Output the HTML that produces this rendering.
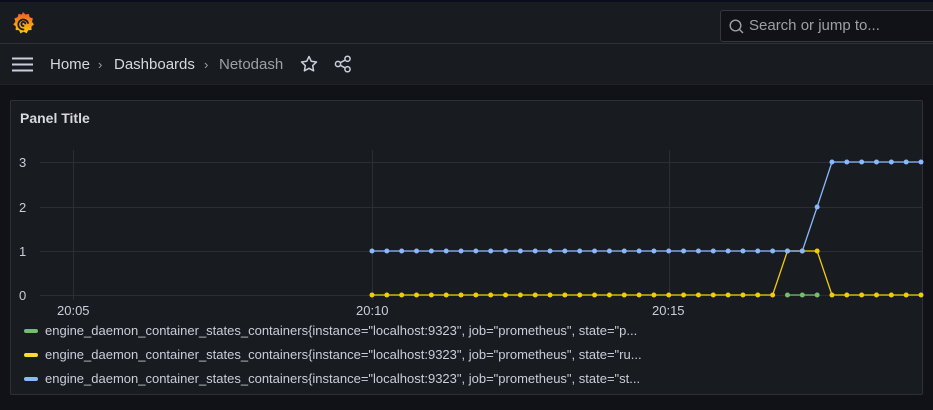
<!DOCTYPE html>
<html><head><meta charset="utf-8"><style>
*{margin:0;padding:0;box-sizing:border-box}
body{width:933px;height:410px;background:#111217;font-family:"Liberation Sans",sans-serif;position:relative;overflow:hidden;color:#ccccdc}
.top{position:absolute;left:0;top:0;width:933px;height:44px;background:#181b1f;border-top:2px solid #0b0c1e;border-bottom:1px solid #2c3039}
.search{position:absolute;left:720px;top:8px;width:230px;height:32px;border:1px solid #34373e;border-radius:3px;background:#111217;color:#9da0a8;font-size:15px;padding:6px 0 0 28px}
.nav{position:absolute;left:0;top:44px;width:933px;height:41px;background:#181b1f;border-bottom:1px solid #202226}
.bc{position:absolute;top:12px;font-size:15px;color:#d8d9dd}
.panel{position:absolute;left:10px;top:100px;width:913px;height:295px;background:#181b1f;border:1px solid #2c3039;border-radius:2px}
.title{position:absolute;left:9px;top:9px;font-size:14px;font-weight:bold;color:#d8d9dd}
.lg{position:absolute;left:13px;font-size:13px;color:#ccccdc;white-space:nowrap}
.lg i{display:inline-block;width:14px;height:4px;border-radius:2px;margin-right:7px;vertical-align:middle;position:relative;top:-1px}
</style></head><body>
<div class="top">
<svg style="position:absolute;left:11px;top:9px" width="24" height="26" viewBox="0 0 24 26"><defs><linearGradient id="g" x1="0" y1="1" x2="0" y2="0"><stop offset="0" stop-color="#fbca0a"/><stop offset="1" stop-color="#f05a28"/></linearGradient></defs><path d="M12 1l2.5 2.5 3.3-.6.9 3.3 3.2 1.2-.9 3.3 2 2.7-2.6 2.2.2 3.4-3.4.3-1.5 3-3.1-1.5-3.1 1.6-1.5-3.1-3.4-.3.3-3.4-2.6-2.2 2-2.7-.9-3.3 3.2-1.2.9-3.3 3.3.6z" fill="url(#g)"/><path d="M12.5 18.5a5 5 0 1 1 4.5-6.5M12.5 15a2 2 0 1 1 1.8-2.6" fill="none" stroke="#181b1f" stroke-width="1.8" stroke-linecap="round"/></svg>
<div class="search"><svg style="position:absolute;left:8px;top:8px" width="15" height="15" viewBox="0 0 15 15"><circle cx="6.5" cy="6.5" r="5.3" fill="none" stroke="#9da0a8" stroke-width="1.4"/><path d="M10.5 10.5l3.5 3.5" stroke="#9da0a8" stroke-width="1.4"/></svg>Search or jump to...</div>
</div>
<div class="nav">
<svg style="position:absolute;left:12px;top:13px" width="21" height="15"><path d="M0 1.5h21M0 7.5h21M0 13.5h21" stroke="#ccccdc" stroke-width="2"/></svg>
<span class="bc" style="left:50px">Home</span>
<span class="bc" style="left:98px;color:#9da0a8;font-size:13px;top:13px">›</span>
<span class="bc" style="left:114px">Dashboards</span>
<span class="bc" style="left:204px;color:#9da0a8;font-size:13px;top:13px">›</span>
<span class="bc" style="left:219px;color:#9da0a8">Netodash</span>
<svg style="position:absolute;left:300px;top:11px" width="18" height="18" viewBox="0 0 18 18"><path d="M9 1.5l2.3 4.8 5.2.7-3.8 3.6.9 5.2L9 13.3l-4.6 2.5.9-5.2-3.8-3.6 5.2-.7z" fill="none" stroke="#ccccdc" stroke-width="1.5" stroke-linejoin="round"/></svg>
<svg style="position:absolute;left:334px;top:11px" width="18" height="18" viewBox="0 0 18 18"><circle cx="4" cy="9" r="2.6" fill="none" stroke="#ccccdc" stroke-width="1.5"/><circle cx="13.5" cy="3.8" r="2.6" fill="none" stroke="#ccccdc" stroke-width="1.5"/><circle cx="13.5" cy="14.2" r="2.6" fill="none" stroke="#ccccdc" stroke-width="1.5"/><path d="M6.3 7.7l4.9-2.6M6.3 10.3l4.9 2.6" stroke="#ccccdc" stroke-width="1.5"/></svg>
</div>
<div class="panel"><div class="title">Panel Title</div>
<div class="lg" style="top:222px"><i style="background:#73bf69"></i>engine_daemon_container_states_containers{instance="localhost:9323", job="prometheus", state="p...</div>
<div class="lg" style="top:246px"><i style="background:#fade2a"></i>engine_daemon_container_states_containers{instance="localhost:9323", job="prometheus", state="ru...</div>
<div class="lg" style="top:270px"><i style="background:#8ab8ff"></i>engine_daemon_container_states_containers{instance="localhost:9323", job="prometheus", state="st...</div>
</div>
<svg id="c" style="position:absolute;left:0;top:0" width="933" height="410" font-family="Liberation Sans" font-size="13" fill="#ccccdc">
<g stroke="#2c2e33" stroke-width="1">
<path d="M40 162.5H923M40 207.5H923M40 251.5H923M40 295.5H923M73.5 150V300M372.5 150V300M669.5 150V300"/>
</g>
<text x="19" y="167">3</text><text x="19" y="212">2</text><text x="19" y="256">1</text><text x="19" y="300">0</text>
<text x="57" y="315">20:05</text><text x="356" y="315">20:10</text><text x="652" y="315">20:15</text>
</svg>
<script>
var s=document.getElementById('c'),ns='http://www.w3.org/2000/svg';
function Y(v){return [295,251,207,162][v]}
function X(i){return 372+i*14.838}
function ser(vals,col,from,to){var p='';for(var i=from;i<=to;i++)p+=X(i)+','+Y(vals(i))+' ';
var l=document.createElementNS(ns,'polyline');l.setAttribute('points',p);l.setAttribute('fill','none');l.setAttribute('stroke',col);l.setAttribute('stroke-width','1.3');s.appendChild(l);
for(var i=from;i<=to;i++){var c=document.createElementNS(ns,'circle');c.setAttribute('cx',X(i));c.setAttribute('cy',Y(vals(i)));c.setAttribute('r','2.5');c.setAttribute('fill',col);s.appendChild(c);}}
ser(function(i){return 0},'#73bf69',28,30);
ser(function(i){return (i>=28&&i<=30)?1:0},'#f2cc0c',0,37);
ser(function(i){return i<=29?1:(i==30?2:3)},'#8ab8ff',0,37);
</script>
</body></html>
